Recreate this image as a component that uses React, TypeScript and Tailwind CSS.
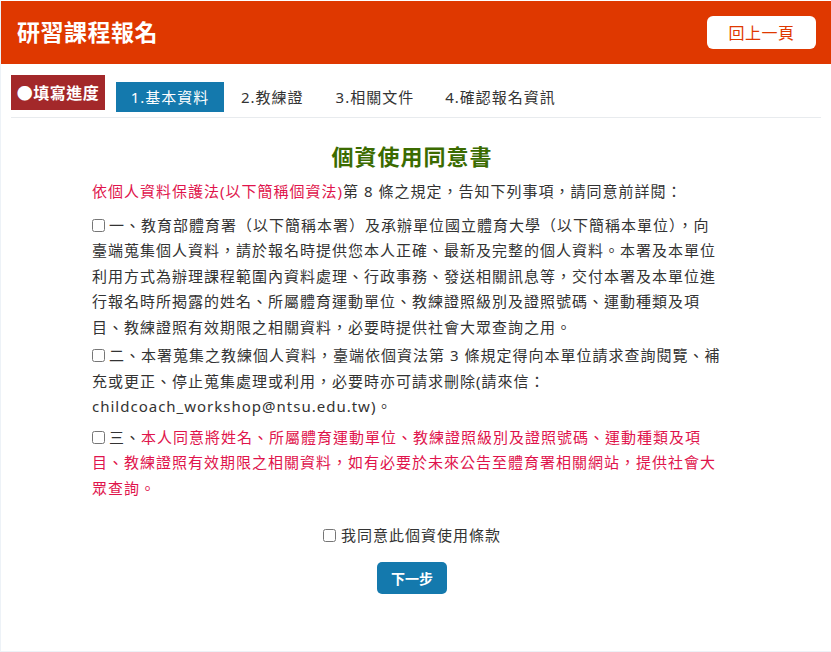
import React from "react";

const font = { fontFamily: '"Noto Sans", "Noto Sans CJK TC", sans-serif' };

export default function App() {
  return (
    <div
      className="w-[831px] h-[652px] bg-white border-t border-t-white border-l border-b border-[#edf2f7] flex flex-col text-[#333]"
      style={font}
    >
      <div className="h-[63px] bg-[#df3800] flex items-center justify-between pl-[16px] pr-[16px] shrink-0">
        <h1 className="text-white text-[23px] font-bold tracking-[0.5px]">研習課程報名</h1>
        <button className="w-[109px] h-[33px] bg-white rounded-[6px] text-[#df3800] text-[16px] tracking-[0.5px] mr-[-1px]">
          回上一頁
        </button>
      </div>

      <div className="px-[10px] pt-[11px]">
        <div className="flex items-end border-b border-[#e8ebee] pb-[5px]">
          <div className="h-[35px] w-[94px] bg-[#a3282a] text-white text-[16px] font-bold tracking-[0.5px] flex items-center justify-center mb-[2px]">
            ●填寫進度
          </div>
          <div className="ml-[11px] h-[30px] w-[108px] bg-[#1479ad] text-white text-[15px] tracking-[1px] flex items-center justify-center">
            1.基本資料
          </div>
          <div className="ml-[17px] h-[30px] text-[15px] tracking-[1px] flex items-center">2.教練證</div>
          <div className="ml-[32px] h-[30px] text-[15px] tracking-[1px] flex items-center">3.相關文件</div>
          <div className="ml-[31px] h-[30px] text-[15px] tracking-[1px] flex items-center">4.確認報名資訊</div>
        </div>
      </div>

      <div className="ml-[91px] w-[640px] pt-[23px]">
        <h2 className="text-center text-[#3b6b00] text-[22px] font-bold leading-[30px] tracking-[1px]">
          個資使用同意書
        </h2>
        <p className="mt-[8px] text-[15px] leading-[25.5px] tracking-[1px]">
          <span className="text-[#e0144c]">依個人資料保護法(以下簡稱個資法)</span>第 8 條之規定，告知下列事項，請同意前詳閱：
        </p>
        <p className="mt-[8px] pr-[10px] text-[15px] leading-[25.5px] tracking-[1px]">
          <input type="checkbox" className="m-0 mr-[4px] align-[-1px]" />
          一、教育部體育署（以下簡稱本署）及承辦單位國立體育大學（以下簡稱本單位），向臺端蒐集個人資料，請於報名時提供您本人正確、最新及完整的個人資料。本署及本單位利用方式為辦理課程範圍內資料處理、行政事務、發送相關訊息等，交付本署及本單位進行報名時所揭露的姓名、所屬體育運動單位、教練證照級別及證照號碼、運動種類及項目、教練證照有效期限之相關資料，必要時提供社會大眾查詢之用。
        </p>
        <p className="mt-[3px] pr-[10px] text-[15px] leading-[25.5px] tracking-[1px]">
          <input type="checkbox" className="m-0 mr-[4px] align-[-1px]" />
          二、本署蒐集之教練個人資料，臺端依個資法第 3 條規定得向本單位請求查詢閱覽、補充或更正、停止蒐集處理或利用，必要時亦可請求刪除(請來信：childcoach_workshop@ntsu.edu.tw)。
        </p>
        <p className="mt-[5px] pr-[10px] text-[15px] leading-[25.5px] tracking-[1px]">
          <input type="checkbox" className="m-0 mr-[4px] align-[-1px]" />
          三、
          <span className="text-[#e0144c]">
            本人同意將姓名、所屬體育運動單位、教練證照級別及證照號碼、運動種類及項目、教練證照有效期限之相關資料，如有必要於未來公告至體育署相關網站，提供社會大眾查詢。
          </span>
        </p>

        <div className="mt-[22px] flex justify-center items-center text-[15px] leading-[25px] tracking-[1px]">
          <input type="checkbox" className="m-0 mr-[5px]" />
          <span>我同意此個資使用條款</span>
        </div>
        <div className="mt-[14px] flex justify-center">
          <button className="w-[70px] h-[32px] bg-[#1479ad] text-white text-[14px] font-bold rounded-[5px]">
            下一步
          </button>
        </div>
      </div>
    </div>
  );
}
